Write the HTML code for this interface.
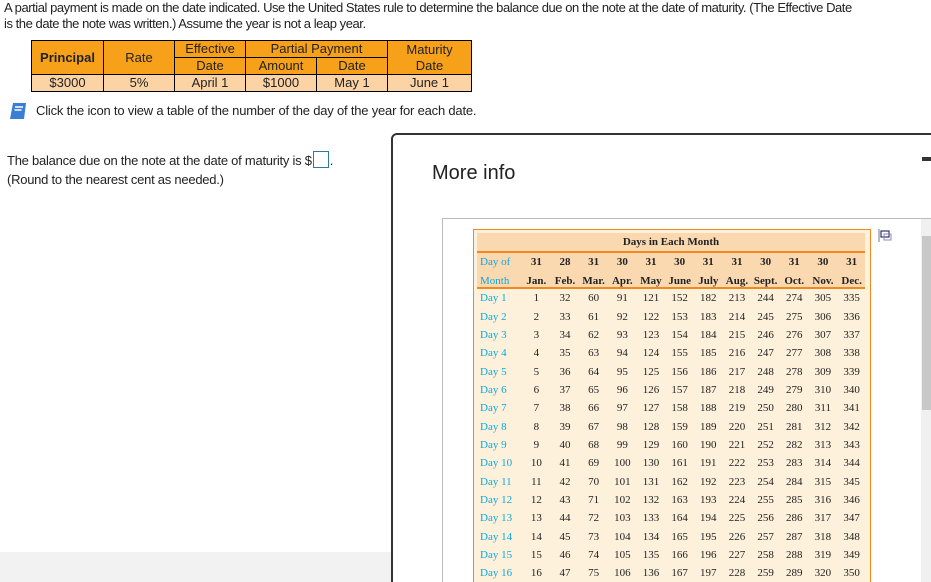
<!DOCTYPE html>
<html style="overflow:hidden;height:582px"><head><meta charset="utf-8"><style>
body{margin:0;width:931px;height:582px;overflow:hidden;background:#fff;font-family:"Liberation Sans",sans-serif;color:#222;position:relative}
.a{position:absolute}
.q{left:4px;top:0px;font-size:13px;line-height:16px;letter-spacing:-0.45px;width:930px;white-space:nowrap}
table.p{position:absolute;left:31px;top:40px;border-collapse:collapse;font-size:13px;text-align:center}
table.p td{border:1px solid #000;padding:0;line-height:16px}
.o{background:#f7a11a;color:#222}
.l{background:#fcd3a4}
.rt{border-collapse:collapse;font-family:"Liberation Serif",serif;font-size:11px;table-layout:fixed;width:389px}
.rt td{padding:0;height:18.35px;text-align:center;color:#222;white-space:nowrap;overflow:visible}
.rt td.d{color:#0aa8dd;text-align:left;padding-left:3px}
</style></head><body>
<div class="a q">A partial payment is made on the date indicated. Use the United States rule to determine the balance due on the note at the date of maturity. (The Effective Date<br>is the date the note was written.) Assume the year is not a leap year.</div>
<table class="p">
<tr class="o"><td rowspan="2" style="width:71px;font-weight:bold">Principal</td><td rowspan="2" style="width:70px">Rate</td><td style="width:70px">Effective</td><td colspan="2">Partial Payment</td><td rowspan="2" style="width:83px">Maturity<br>Date</td></tr>
<tr class="o"><td>Date</td><td style="width:70px">Amount</td><td style="width:70px">Date</td></tr>
<tr class="l"><td>$3000</td><td>5%</td><td>April 1</td><td>$1000</td><td>May 1</td><td>June 1</td></tr>
</table>
<svg class="a" style="left:9px;top:102px" width="18" height="18" viewBox="0 0 18 18"><path d="M4 1h13l-2 16H1z" fill="#3a7fd4"/><path d="M6 5h8M5.5 8h7" stroke="#fff" stroke-width="1.4"/></svg>
<div class="a" style="left:36px;top:103px;font-size:13px;letter-spacing:-0.2px">Click the icon to view a table of the number of the day of the year for each date.</div>
<div class="a" style="left:7px;top:151px;font-size:13px;letter-spacing:-0.25px;line-height:19px">The balance due on the note at the date of maturity is $<span style="display:inline-block;width:14px;height:15px;border:1px solid #2a7a9a;vertical-align:-3px;margin:0 1px"></span>.<br>(Round to the nearest cent as needed.)</div>
<div class="a" style="left:0;top:552px;width:391px;height:30px;background:#f2f2f2"></div>
<div class="a" style="left:391px;top:133px;width:560px;height:470px;border:2px solid #333;border-radius:6px;background:#fff"></div>
<div class="a" style="left:432px;top:162px;font-size:20px;color:#222">More info</div>
<div class="a" style="left:922px;top:157px;width:9px;height:4px;background:#333"></div>
<div class="a" style="left:442px;top:218px;width:500px;height:380px;border:1px solid #bbb"></div>
<div class="a" style="left:921px;top:219px;width:10px;height:363px;background:#f0f0f0"></div>
<div class="a" style="left:922px;top:236px;width:9px;height:174px;background:#c8c8c8"></div>
<svg class="a" style="left:878px;top:229px" width="14" height="14"><rect x="0" y="0" width="2" height="13" fill="#bbb"/><rect x="3" y="2" width="8" height="6" fill="none" stroke="#336" stroke-width="1.2"/><rect x="6" y="5" width="7" height="6" fill="none" stroke="#88b" stroke-width="1"/></svg>
<div class="a" style="left:473px;top:229px;width:396px;height:370px;border:1px solid #f08a20;background:#fdf1dc"></div>
<div class="a" style="left:477px;top:233px;width:388px;height:55px;background:#fbd9b0"></div>
<div class="a" style="left:477px;top:251px;width:388px;height:2px;background:#f08a20"></div>
<div class="a" style="left:477px;top:287px;width:388px;height:2px;background:#f08a20"></div>
<div class="a" style="left:477px;top:236px;width:388px;text-align:center;font-family:'Liberation Serif',serif;font-weight:bold;font-size:11px">Days in Each Month</div>
<div class="a" style="left:477px;top:253px">
<table class="rt" style="font-weight:bold">
<colgroup><col style="width:45px"><col span="12" style="width:28.65px"></colgroup>
<tr><td class="d" style="font-weight:normal;height:18px">Day of</td><td>31</td><td>28</td><td>31</td><td>30</td><td>31</td><td>30</td><td>31</td><td>31</td><td>30</td><td>31</td><td>30</td><td>31</td></tr>
<tr><td class="d" style="font-weight:normal;height:17px">Month</td><td>Jan.</td><td>Feb.</td><td>Mar.</td><td>Apr.</td><td>May</td><td>June</td><td>July</td><td>Aug.</td><td>Sept.</td><td>Oct.</td><td>Nov.</td><td>Dec.</td></tr>
</table></div>
<div class="a" style="left:477px;top:289px">
<table class="rt">
<colgroup><col style="width:45px"><col span="12" style="width:28.65px"></colgroup>
<tr><td class="d">Day 1</td><td>1</td><td>32</td><td>60</td><td>91</td><td>121</td><td>152</td><td>182</td><td>213</td><td>244</td><td>274</td><td>305</td><td>335</td></tr>
<tr><td class="d">Day 2</td><td>2</td><td>33</td><td>61</td><td>92</td><td>122</td><td>153</td><td>183</td><td>214</td><td>245</td><td>275</td><td>306</td><td>336</td></tr>
<tr><td class="d">Day 3</td><td>3</td><td>34</td><td>62</td><td>93</td><td>123</td><td>154</td><td>184</td><td>215</td><td>246</td><td>276</td><td>307</td><td>337</td></tr>
<tr><td class="d">Day 4</td><td>4</td><td>35</td><td>63</td><td>94</td><td>124</td><td>155</td><td>185</td><td>216</td><td>247</td><td>277</td><td>308</td><td>338</td></tr>
<tr><td class="d">Day 5</td><td>5</td><td>36</td><td>64</td><td>95</td><td>125</td><td>156</td><td>186</td><td>217</td><td>248</td><td>278</td><td>309</td><td>339</td></tr>
<tr><td class="d">Day 6</td><td>6</td><td>37</td><td>65</td><td>96</td><td>126</td><td>157</td><td>187</td><td>218</td><td>249</td><td>279</td><td>310</td><td>340</td></tr>
<tr><td class="d">Day 7</td><td>7</td><td>38</td><td>66</td><td>97</td><td>127</td><td>158</td><td>188</td><td>219</td><td>250</td><td>280</td><td>311</td><td>341</td></tr>
<tr><td class="d">Day 8</td><td>8</td><td>39</td><td>67</td><td>98</td><td>128</td><td>159</td><td>189</td><td>220</td><td>251</td><td>281</td><td>312</td><td>342</td></tr>
<tr><td class="d">Day 9</td><td>9</td><td>40</td><td>68</td><td>99</td><td>129</td><td>160</td><td>190</td><td>221</td><td>252</td><td>282</td><td>313</td><td>343</td></tr>
<tr><td class="d">Day 10</td><td>10</td><td>41</td><td>69</td><td>100</td><td>130</td><td>161</td><td>191</td><td>222</td><td>253</td><td>283</td><td>314</td><td>344</td></tr>
<tr><td class="d">Day 11</td><td>11</td><td>42</td><td>70</td><td>101</td><td>131</td><td>162</td><td>192</td><td>223</td><td>254</td><td>284</td><td>315</td><td>345</td></tr>
<tr><td class="d">Day 12</td><td>12</td><td>43</td><td>71</td><td>102</td><td>132</td><td>163</td><td>193</td><td>224</td><td>255</td><td>285</td><td>316</td><td>346</td></tr>
<tr><td class="d">Day 13</td><td>13</td><td>44</td><td>72</td><td>103</td><td>133</td><td>164</td><td>194</td><td>225</td><td>256</td><td>286</td><td>317</td><td>347</td></tr>
<tr><td class="d">Day 14</td><td>14</td><td>45</td><td>73</td><td>104</td><td>134</td><td>165</td><td>195</td><td>226</td><td>257</td><td>287</td><td>318</td><td>348</td></tr>
<tr><td class="d">Day 15</td><td>15</td><td>46</td><td>74</td><td>105</td><td>135</td><td>166</td><td>196</td><td>227</td><td>258</td><td>288</td><td>319</td><td>349</td></tr>
<tr><td class="d">Day 16</td><td>16</td><td>47</td><td>75</td><td>106</td><td>136</td><td>167</td><td>197</td><td>228</td><td>259</td><td>289</td><td>320</td><td>350</td></tr>
</table></div>
</body></html>
